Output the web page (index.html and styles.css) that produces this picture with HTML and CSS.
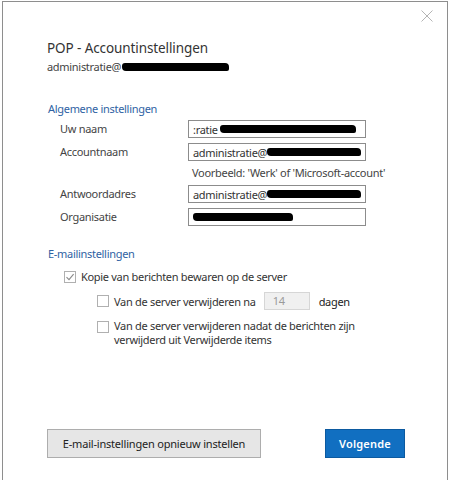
FILE: index.html
```html
<!DOCTYPE html>
<html lang="nl">
<head>
<meta charset="utf-8">
<title>POP - Accountinstellingen</title>
<link rel="stylesheet" href="styles.css">
</head>
<body>
<div class="backdrop">
  <div class="dialog">
    <div class="topbar">
      <svg class="close" width="12" height="12" viewBox="0 0 12 12"><path d="M0.5 0.5 L11.5 11.5 M11.5 0.5 L0.5 11.5" stroke="#b4b4b4" stroke-width="1" fill="none"/></svg>
    </div>
    <div class="content">
      <h1 class="title">POP - Accountinstellingen</h1>
      <div class="subtitle">administratie@<span class="redact r-sub"></span></div>

      <h2 class="section">Algemene instellingen</h2>
      <div class="form">
        <label class="lbl">Uw naam</label>
        <div class="field">:ratie <span class="redact r-name"></span></div>
        <label class="lbl">Accountnaam</label>
        <div class="field">administratie@<span class="redact r-acc"></span></div>
        <div></div>
        <div class="hint">Voorbeeld: 'Werk' of 'Microsoft-account'</div>
        <label class="lbl">Antwoordadres</label>
        <div class="field">administratie@<span class="redact r-acc"></span></div>
        <label class="lbl">Organisatie</label>
        <div class="field"><span class="redact r-org"></span></div>
      </div>

      <h2 class="section section-mail">E-mailinstellingen</h2>
      <div class="checks">
        <div class="check-row">
          <span class="box checked"><svg width="10" height="10" viewBox="0 0 10 10"><path d="M1.5 5.2 L4 7.6 L8.6 2.2" stroke="#8a8a8a" stroke-width="1.1" fill="none"/></svg></span>
          <span class="check-label">Kopie van berichten bewaren op de server</span>
        </div>
        <div class="check-row sub">
          <span class="box"></span>
          <span class="check-label">Van de server verwijderen na</span>
          <span class="days-input">14</span>
          <span class="days">dagen</span>
        </div>
        <div class="check-row sub top">
          <span class="box"></span>
          <span class="check-label">Van de server verwijderen nadat de berichten zijn<br>verwijderd uit Verwijderde items</span>
        </div>
      </div>
    </div>
    <div class="actions">
      <button class="btn btn-secondary">E-mail-instellingen opnieuw instellen</button>
      <button class="btn btn-primary">Volgende</button>
    </div>
  </div>
</div>
</body>
</html>
```
FILE: styles.css
```css
html, body {
  margin: 0;
  padding: 0;
  background: #ffffff;
}
body {
  font-family: "Noto Sans", "Open Sans", sans-serif;
  font-size: 11px;
  letter-spacing: -0.3px;
  color: #333333;
  width: 450px;
  height: 480px;
  overflow: hidden;
}
.backdrop {
  padding: 1px 0 0 2px;
  height: 479px;
  background: #ffffff;
}
.dialog {
  box-sizing: border-box;
  width: 446px;
  height: 480px;
  border: 1px solid #8e8e8e;
  border-bottom: none;
  background: #ffffff;
  display: flex;
  flex-direction: column;
}
.topbar {
  display: flex;
  justify-content: flex-end;
  padding: 8px 14px 0 0;
  height: 12px;
}
.close { display: block; }
.content {
  padding-left: 44px;
}
.title {
  margin: 17px 0 0 0;
  font-weight: 400;
  font-size: 13.5px;
  letter-spacing: -0.1px;
  line-height: 18px;
  color: #333333;
}
.subtitle {
  margin-top: 2px;
  font-size: 11px;
  line-height: 15px;
  color: #444444;
  display: flex;
  align-items: center;
}
.redact {
  display: inline-block;
  height: 8px;
  background: #000;
  border-radius: 3px 4px 2px 4px;
}
.r-sub { width: 107px; margin-left: 1px; }
.r-name { width: 136px; margin-left: 2px; }
.r-acc { width: 95px; }
.r-org { width: 100px; }
.section {
  margin: 28px 0 0 1px;
  font-weight: 400;
  font-size: 11px;
  line-height: 14px;
  color: #2f62a3;
}
.form {
  display: grid;
  grid-template-columns: 128px 178px;
  margin: 4px 0 0 13px;
  row-gap: 5px;
  align-items: center;
}
.lbl {
  color: #444444;
  line-height: 18px;
}
.field {
  box-sizing: border-box;
  height: 18px;
  border: 1px solid #8c8c8c;
  padding: 0 4px;
  display: flex;
  align-items: center;
  white-space: nowrap;
  overflow: hidden;
  color: #333333;
}
.hint {
  color: #444444;
  line-height: 14px;
  margin: 0 0 0 4px;
  white-space: nowrap;
}
.section-mail { margin-top: 21px; }
.checks {
  margin: 8px 0 0 17px;
  display: flex;
  flex-direction: column;
}
.check-row {
  display: flex;
  align-items: center;
  color: #333333;
  line-height: 15px;
}
.check-row.sub { margin-left: 33px; margin-top: 8px; }
.check-row.top { align-items: flex-start; margin-top: 9px; line-height: 14px; }
.box {
  box-sizing: border-box;
  width: 12px;
  height: 12px;
  border: 1px solid #b0b0b0;
  background: #fff;
  margin-right: 5px;
  flex: none;
  display: flex;
  align-items: center;
  justify-content: center;
}
.check-row.top .box { margin-top: 2px; }
.days-input {
  box-sizing: border-box;
  width: 46px;
  height: 18px;
  margin-left: 8px;
  background: #f0f0f0;
  border: 1px solid #d6d6d6;
  color: #9a9a9a;
  padding-left: 8px;
  line-height: 16px;
}
.days {
  margin-left: 9px;
  color: #222222;
}
.actions {
  margin-top: auto;
  display: flex;
  justify-content: space-between;
  padding: 0 42px 23px 44px;
}
.btn {
  font-family: "Noto Sans", "Open Sans", sans-serif;
  font-size: 11px;
  letter-spacing: -0.2px;
  height: 29px;
  box-sizing: border-box;
  cursor: default;
  padding: 0;
}
.btn-secondary {
  width: 214px;
  background: #e6e6e6;
  border: 1px solid #adadad;
  color: #222222;
}
.btn-primary {
  width: 80px;
  background: #116fc1;
  border: 1px solid #0c5aa0;
  color: #ffffff;
  font-weight: 600;
  letter-spacing: 0.2px;
}
```
